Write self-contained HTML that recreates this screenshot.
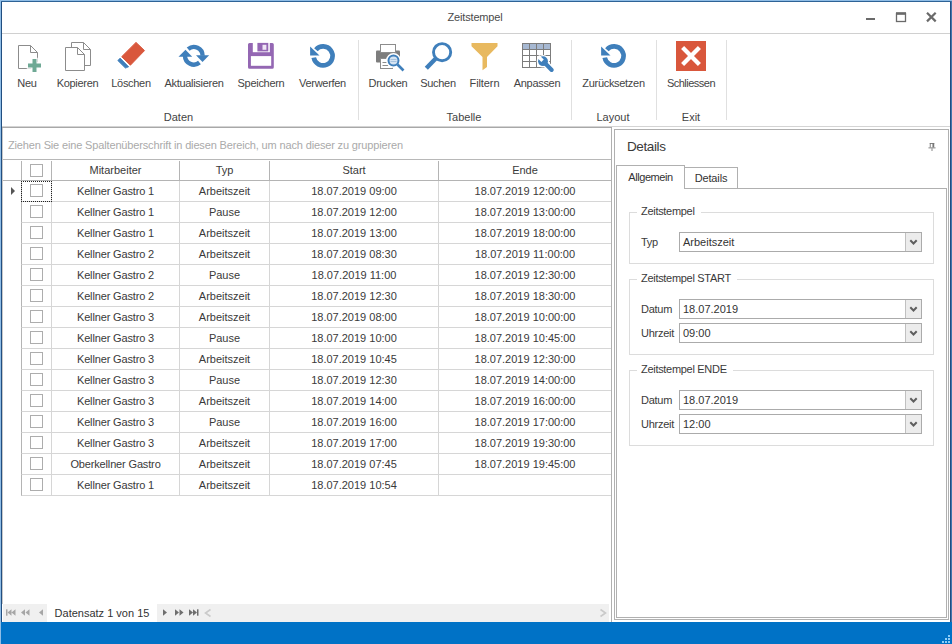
<!DOCTYPE html>
<html lang="de"><head><meta charset="utf-8"><title>Zeitstempel</title>
<style>
*{box-sizing:border-box;margin:0;padding:0}
html,body{width:952px;height:644px;overflow:hidden;background:#fff}
body{font-family:"Liberation Sans",sans-serif;font-size:11px;color:#3c3c3c}
.win{position:absolute;left:0;top:0;width:952px;height:644px;background:#fff;overflow:hidden}
.bl,.bl2,.br,.br2,.bt,.bt2{position:absolute}
.bl{left:0;top:0;width:1px;height:644px;background:#8fbde6}
.bl2{left:1px;top:1px;width:1px;height:621px;background:#214e80}
.br{left:951px;top:0;width:1px;height:622px;background:#4577ad}
.br2{left:950px;top:1px;width:1px;height:621px;background:#214e80}
.bt{left:0;top:0;width:952px;height:1px;background:#8fbde6}
.bt2{left:1px;top:1px;width:950px;height:1px;background:#2e6396}
.title{position:absolute;left:1px;top:2px;width:948px;height:31px;line-height:30px;text-align:center;font-size:11px;color:#4a4a4a;letter-spacing:-0.180px}
.tline{position:absolute;left:2px;top:33px;width:948px;height:1px;background:#d0d0d0}
.wbtn{position:absolute;top:2px}
.ribbon{position:absolute;left:2px;top:34px;width:948px;height:93px;background:#fff}
.rline{position:absolute;left:2px;top:126px;width:948px;height:1px;background:#d4d4d4}
.gtop{position:absolute;left:2px;top:127px;width:610px;height:1px;background:#a8a8a8}
.rb{position:absolute;top:8px;text-align:center;white-space:nowrap}
.rb svg{display:block;margin:0 auto}
.rb span{display:block;margin-top:3px;font-size:11px;line-height:13px;color:#3a3a3a}
.rsep{position:absolute;top:40px;width:1px;height:80px;background:#e0e0e0}
.rgl{position:absolute;top:110px;height:14px;line-height:14px;font-size:11px;color:#444;text-align:center;white-space:nowrap}
/* grid */
.grid{position:absolute;left:2px;top:128px;width:610px;height:476px;border-left:1px solid #c8c8c8;border-right:1px solid #b0b0b0;background:#fff}
.grouppanel{position:absolute;left:0;top:0;width:608px;height:32px;line-height:35px;padding-left:5px;color:#aaa;font-size:11px;border-bottom:1px solid #b8b8b8;white-space:nowrap;letter-spacing:-0.150px}
.ghead{position:absolute;left:0;top:32px;width:608px;height:21px;border-bottom:1px solid #b4b4b4}
.hc{position:absolute;top:1px;height:19px;line-height:18px;text-align:center;border-right:1px solid #b4b4b4;color:#3a3a3a}
.grow{position:absolute;left:-3px;width:611px;height:21px}
.gc{position:absolute;top:0;height:21px;line-height:20px;text-align:center;border-right:1px solid #d6d6d6;border-bottom:1px solid #d6d6d6;color:#3a3a3a;white-space:nowrap}
.c0{left:0;width:19px}
.hc.c1{left:19px;width:30px}.hc.c2{left:49px;width:128px}.hc.c3{left:177px;width:90px}.hc.c4{left:267px;width:169px}.hc.c5{left:436px;width:172px;border-right:none}
.gc.c1{left:21px;width:31px;border-left:1px solid #b4b4b4}.gc.c2{left:52px;width:128px}.gc.c3{left:180px;width:90px}.gc.c4{left:270px;width:169px}.gc.c5{left:439px;width:172px;border-right:none}
.cb{position:absolute;left:8px;top:3px;width:13px;height:13px;border:1px solid #adadad;background:#fff}
.hc .cb{left:8px;top:3px}
.foc{outline:1px dotted #222;outline-offset:-1px}
.ind{position:absolute;left:11px;top:6px;width:0;height:0;border-left:4px solid #555;border-top:4px solid transparent;border-bottom:4px solid transparent}
/* nav */
.nav{position:absolute;left:3px;top:604px;width:606px;height:18px;background:#f0f0f0;overflow:hidden}
.navtxt{position:absolute;left:44px;top:0;width:110px;height:18px;line-height:18px;background:#fff;text-align:center;font-size:11px;color:#333;white-space:nowrap}
.nav svg{position:absolute;top:0;left:0}
/* status */
.status{position:absolute;left:0;top:622px;width:952px;height:22px;background:#0072c6}
.grip{position:absolute;right:1px;bottom:-2px}
/* right panel */
.panel{position:absolute;left:614px;top:129px;width:335px;height:491px;border:1px solid #b0b0b0;background:#fff}
.panel .in{position:absolute;left:2px;top:2px;right:2px;bottom:2px;border:1px solid #b0b0b0}
.ptitle{position:absolute;left:627px;top:138px;font-size:13.500px;letter-spacing:-0.380px;line-height:18px;color:#3a3a3a}
.tab{position:absolute;font-size:11px;color:#333;text-align:center;background:#fff;border:1px solid #b0b0b0;border-bottom:none}
.tab1{left:616px;top:165px;width:69px;height:24px;line-height:23px;z-index:2;letter-spacing:-0.430px}
.tab2{left:684px;top:167px;width:54px;height:21px;line-height:21px;border-bottom:none;letter-spacing:-0.150px}
.tabpage{position:absolute;left:616px;top:188px;width:331px;height:430px;border:1px solid #b0b0b0;background:#fff}
.gb{position:absolute;left:629px;width:305px;border:1px solid #dcdcdc}
.gbl{position:absolute;left:7px;top:-9px;letter-spacing:-0.300px;background:#fff;padding:0 6px 0 4px;font-size:11px;line-height:14px;color:#3a3a3a;white-space:nowrap}
.lbl{position:absolute;left:11px;letter-spacing:-0.250px;font-size:11px;line-height:14px;color:#3a3a3a}
.combo{position:absolute;left:49px;width:243px;height:20px;border:1px solid #ababab;background:#fff;line-height:18px;padding-left:3px;font-size:11px;color:#333}
.combo i{position:absolute;right:0;top:0;width:16px;height:18px;border-left:1px solid #c0c0c0;background:#ececec}
.combo i svg{position:absolute;left:3px;top:6px}

.ico{position:absolute}
.rl{position:absolute;top:76px;width:100px;margin-left:-50px;text-align:center;font-size:11px;line-height:14px;color:#444;white-space:nowrap;letter-spacing:-0.3px}
.rgl{width:100px;margin-left:-50px}
.gridr{position:absolute;left:611px;top:604px;width:1px;height:18px;background:#b0b0b0}
.pin{position:absolute;left:928px;top:143px}

.gc.c2{letter-spacing:-0.150px}

</style></head><body>
<div class="win">
<div class="title">Zeitstempel</div>
<svg class="wbtn" style="left:860px" width="88" height="30" viewBox="0 0 88 30"><g fill="none" stroke="#6a6a6a"><path d="M6 17h9" stroke-width="2"/><rect x="36.500" y="11.500" width="9" height="8" stroke-width="1.300"/><path d="M36 11.500h10" stroke-width="2.600"/><path d="M67 10.700l8.700 8.700M75.700 10.700l-8.700 8.700" stroke-width="2.200"/></g></svg>
<div class="tline"></div>
<div class="ribbon"></div>

<svg class="ico" style="left:13px;top:41px" width="32" height="32" viewBox="0 0 32 32"><path d="M5.500 4.500h12l7 7v16h-19z" fill="#fff" stroke="#8c8c8c"/><path d="M17.500 4.500v7h7" fill="none" stroke="#8c8c8c"/><path d="M19.500 18h4v4.500h4.500v4h-4.500v4.500h-4v-4.500h-4.500v-4h4.500z" fill="#6fa995" stroke="#fff" stroke-width="2.400" paint-order="stroke"/></svg>
<div class="rl" style="left:27px">Neu</div>

<svg class="ico" style="left:61px;top:41px" width="32" height="32" viewBox="0 0 32 32"><path d="M10.500 1.500h12l7 7v16h-19z" fill="#fff" stroke="#8c8c8c"/><path d="M22.500 1.500v7h7" fill="none" stroke="#8c8c8c"/><path d="M4.500 6.500h12l7 7v16h-19z" fill="#fff" stroke="#8c8c8c"/><path d="M16.500 6.500v7h7" fill="none" stroke="#8c8c8c"/></svg>
<div class="rl" style="left:77.500px">Kopieren</div>

<svg class="ico" style="left:115px;top:41px" width="32" height="32" viewBox="0 0 32 32"><path d="M21 1.400L29.500 9.600 15.400 24.200 6.700 15.700z" fill="#d9573c" stroke="#d9573c" stroke-width="1" stroke-linejoin="round"/><path d="M5.100 17.100L13.700 25.800 10.400 27.100 2.800 19.600z" fill="#3f7fbb" stroke="#3f7fbb" stroke-width="0.800" stroke-linejoin="round"/></svg>
<div class="rl" style="left:131px">Löschen</div>

<svg class="ico" style="left:178px;top:41px" width="32" height="32" viewBox="0 0 32 32"><g fill="none" stroke="#3f7fbb" stroke-width="4.400"><path d="M10.140 8.060A8.800 8.800 0 0 1 24.600 14.800"/><path d="M7 14.800A8.800 8.800 0 0 0 21.460 21.540"/></g><g fill="#3f7fbb"><path d="M18 14.300h13.200l-6.700 6.800z"/><path d="M0.500 15.700h13.700l-6.700-7z"/></g></svg>
<div class="rl" style="left:194px">Aktualisieren</div>

<svg class="ico" style="left:245px;top:41px" width="32" height="32" viewBox="0 0 32 32"><path d="M4.500 2h22.800a1.500 1.500 0 0 1 1.500 1.500v22.800a1.500 1.500 0 0 1-1.500 1.500h-22.800a1.500 1.500 0 0 1-1.500-1.500v-22.800a1.500 1.500 0 0 1 1.500-1.500z" fill="#9467b3"/><rect x="5.900" y="15.100" width="20.300" height="9.700" fill="#fff"/><rect x="7.800" y="1.900" width="17" height="9.300" fill="#fff"/><rect x="12.400" y="1.900" width="10.900" height="8.500" fill="#9467b3"/><rect x="17.500" y="3.800" width="3.900" height="5" fill="#efe6f5"/></svg>
<div class="rl" style="left:261px">Speichern</div>

<svg class="ico" style="left:307px;top:41px" width="32" height="32" viewBox="0 0 32 32"><path d="M8.900 8.700A9.500 9.500 0 1 1 6.740 16.650" fill="none" stroke="#3f7fbb" stroke-width="4.700"/><path d="M3.100 5.400v9.100h9.400z" fill="#3f7fbb"/></svg>
<div class="rl" style="left:322.500px">Verwerfen</div>

<div class="rsep" style="left:358px"></div>

<svg class="ico" style="left:374px;top:41px" width="32" height="32" viewBox="0 0 32 32"><rect x="2" y="9.500" width="24" height="12" rx="1" fill="#7d7d7d"/><rect x="6.500" y="3.500" width="15" height="8" fill="#fff" stroke="#8c8c8c"/><rect x="6.500" y="17.500" width="12" height="10" fill="#fff" stroke="#8c8c8c"/><path d="M8.500 21.500h6M8.500 24.500h6" stroke="#8c8c8c"/><circle cx="19.500" cy="19.500" r="6" fill="#d6e4f2" stroke="#fff" stroke-width="3"/><circle cx="19.500" cy="19.500" r="5" fill="#d6e4f2" stroke="#3f7fbb" stroke-width="2"/><path d="M16.500 18.500h6M16.500 20.500h6" stroke="#a9c3de"/><path d="M23.500 23.500l6 6" stroke="#3f7fbb" stroke-width="2.600"/></svg>
<div class="rl" style="left:388px">Drucken</div>

<svg class="ico" style="left:422px;top:41px" width="32" height="32" viewBox="0 0 32 32"><circle cx="20.100" cy="11.200" r="8.600" fill="#fff" stroke="#3f7fbb" stroke-width="2.900"/><path d="M14 17.300l-9.700 9.900" stroke="#3f7fbb" stroke-width="4.400"/></svg>
<div class="rl" style="left:438px">Suchen</div>

<svg class="ico" style="left:469px;top:41px" width="32" height="32" viewBox="0 0 32 32"><path d="M2.500 2h26v3.200l-10.500 10.800v10l-4.500 3.200v-13.200l-11-10.800z" fill="#e8b95f"/></svg>
<div class="rl" style="left:484.500px;letter-spacing:-0.100px">Filtern</div>

<svg class="ico" style="left:521px;top:41px" width="34" height="34" viewBox="0 0 34 34"><rect x="1.500" y="2.500" width="28" height="24" fill="#fff" stroke="#7c7c7c"/><rect x="2" y="3" width="27" height="5.500" fill="#a6b8d2"/><path d="M1.500 8.500h28M1.500 14.500h28M1.500 20.500h28M8.500 2.500v24M15.500 2.500v24M22.500 2.500v24" stroke="#7c7c7c" fill="none"/><g transform="translate(22,20.200) rotate(45)"><circle r="6.300" fill="#fff"/><rect x="2" y="-3.400" width="13.500" height="6.800" rx="3" fill="#fff"/><circle r="4.900" fill="#3f7fbb"/><rect x="2" y="-2.100" width="12.300" height="4.200" rx="2" fill="#3f7fbb"/><rect x="-7" y="-1.700" width="6.400" height="3.400" fill="#fff"/></g></svg>
<div class="rl" style="left:537px">Anpassen</div>

<div class="rsep" style="left:571px"></div>

<svg class="ico" style="left:597.500px;top:41px" width="32" height="32" viewBox="0 0 32 32"><path d="M8.900 8.700A9.500 9.500 0 1 1 6.740 16.650" fill="none" stroke="#3f7fbb" stroke-width="4.700"/><path d="M3.100 5.400v9.100h9.400z" fill="#3f7fbb"/></svg>
<div class="rl" style="left:613.500px">Zurücksetzen</div>

<div class="rsep" style="left:656px"></div>

<svg class="ico" style="left:675px;top:40px" width="32" height="32" viewBox="0 0 32 32"><rect x="1" y="1" width="30" height="30" fill="#d9573c"/><path d="M7.600 7.600l16.800 16.800M24.400 7.600l-16.800 16.800" stroke="#fff" stroke-width="4.300"/></svg>
<div class="rl" style="left:691px;letter-spacing:-0.500px">Schliessen</div>

<div class="rsep" style="left:726px"></div>

<div class="rgl" style="left:178.500px">Daten</div>
<div class="rgl" style="left:464px">Tabelle</div>
<div class="rgl" style="left:613px">Layout</div>
<div class="rgl" style="left:691px">Exit</div>
<div class="rline"></div><div class="gtop"></div>

<div class="grid">
<div class="grouppanel">Ziehen Sie eine Spaltenüberschrift in diesen Bereich, um nach dieser zu gruppieren</div>
<div class="ghead"><div class="hc c0"></div><div class="hc c1"><span class="cb"></span></div><div class="hc c2">Mitarbeiter</div><div class="hc c3">Typ</div><div class="hc c4">Start</div><div class="hc c5">Ende</div></div>
<div class="grow" style="top:53px"><div class="ind"></div><div class="gc c1 foc"><span class="cb"></span></div><div class="gc c2">Kellner Gastro 1</div><div class="gc c3">Arbeitszeit</div><div class="gc c4">18.07.2019 09:00</div><div class="gc c5">18.07.2019 12:00:00</div></div>
<div class="grow" style="top:74px"><div class="gc c1"><span class="cb"></span></div><div class="gc c2">Kellner Gastro 1</div><div class="gc c3">Pause</div><div class="gc c4">18.07.2019 12:00</div><div class="gc c5">18.07.2019 13:00:00</div></div>
<div class="grow" style="top:95px"><div class="gc c1"><span class="cb"></span></div><div class="gc c2">Kellner Gastro 1</div><div class="gc c3">Arbeitszeit</div><div class="gc c4">18.07.2019 13:00</div><div class="gc c5">18.07.2019 18:00:00</div></div>
<div class="grow" style="top:116px"><div class="gc c1"><span class="cb"></span></div><div class="gc c2">Kellner Gastro 2</div><div class="gc c3">Arbeitszeit</div><div class="gc c4">18.07.2019 08:30</div><div class="gc c5">18.07.2019 11:00:00</div></div>
<div class="grow" style="top:137px"><div class="gc c1"><span class="cb"></span></div><div class="gc c2">Kellner Gastro 2</div><div class="gc c3">Pause</div><div class="gc c4">18.07.2019 11:00</div><div class="gc c5">18.07.2019 12:30:00</div></div>
<div class="grow" style="top:158px"><div class="gc c1"><span class="cb"></span></div><div class="gc c2">Kellner Gastro 2</div><div class="gc c3">Arbeitszeit</div><div class="gc c4">18.07.2019 12:30</div><div class="gc c5">18.07.2019 18:30:00</div></div>
<div class="grow" style="top:179px"><div class="gc c1"><span class="cb"></span></div><div class="gc c2">Kellner Gastro 3</div><div class="gc c3">Arbeitszeit</div><div class="gc c4">18.07.2019 08:00</div><div class="gc c5">18.07.2019 10:00:00</div></div>
<div class="grow" style="top:200px"><div class="gc c1"><span class="cb"></span></div><div class="gc c2">Kellner Gastro 3</div><div class="gc c3">Pause</div><div class="gc c4">18.07.2019 10:00</div><div class="gc c5">18.07.2019 10:45:00</div></div>
<div class="grow" style="top:221px"><div class="gc c1"><span class="cb"></span></div><div class="gc c2">Kellner Gastro 3</div><div class="gc c3">Arbeitszeit</div><div class="gc c4">18.07.2019 10:45</div><div class="gc c5">18.07.2019 12:30:00</div></div>
<div class="grow" style="top:242px"><div class="gc c1"><span class="cb"></span></div><div class="gc c2">Kellner Gastro 3</div><div class="gc c3">Pause</div><div class="gc c4">18.07.2019 12:30</div><div class="gc c5">18.07.2019 14:00:00</div></div>
<div class="grow" style="top:263px"><div class="gc c1"><span class="cb"></span></div><div class="gc c2">Kellner Gastro 3</div><div class="gc c3">Arbeitszeit</div><div class="gc c4">18.07.2019 14:00</div><div class="gc c5">18.07.2019 16:00:00</div></div>
<div class="grow" style="top:284px"><div class="gc c1"><span class="cb"></span></div><div class="gc c2">Kellner Gastro 3</div><div class="gc c3">Pause</div><div class="gc c4">18.07.2019 16:00</div><div class="gc c5">18.07.2019 17:00:00</div></div>
<div class="grow" style="top:305px"><div class="gc c1"><span class="cb"></span></div><div class="gc c2">Kellner Gastro 3</div><div class="gc c3">Arbeitszeit</div><div class="gc c4">18.07.2019 17:00</div><div class="gc c5">18.07.2019 19:30:00</div></div>
<div class="grow" style="top:326px"><div class="gc c1"><span class="cb"></span></div><div class="gc c2">Oberkellner Gastro</div><div class="gc c3">Arbeitszeit</div><div class="gc c4">18.07.2019 07:45</div><div class="gc c5">18.07.2019 19:45:00</div></div>
<div class="grow" style="top:347px"><div class="gc c1"><span class="cb"></span></div><div class="gc c2">Kellner Gastro 1</div><div class="gc c3">Arbeitszeit</div><div class="gc c4">18.07.2019 10:54</div><div class="gc c5"></div></div>
</div>
<div class="nav">
<svg width="610" height="18" viewBox="1 0 610 18"><g fill="#a6a6a6"><rect x="4" y="5.300" width="1.500" height="6.400"/><path d="M9.500 5.300v6.400l-4-3.200zM13.500 5.300v6.400l-4-3.200z"/><path d="M23 5.300v6.400l-4-3.200zM27.500 5.300v6.400l-4-3.200z"/><path d="M41 5.300v6.400l-4-3.200z"/></g><g fill="#6e6e6e"><path d="M161 5.300v6.400l4-3.200z"/><path d="M173 5.300v6.400l4-3.200zM177.500 5.300v6.400l4-3.200z"/><path d="M187 5.300v6.400l4-3.200zM191 5.300v6.400l4-3.200z"/><rect x="195" y="5.300" width="1.500" height="6.400"/></g><g fill="none" stroke="#cacaca" stroke-width="1.600"><path d="M208.500 5.500l-5 3.500 5 3.500"/><path d="M598.500 5.500l5 3.500-5 3.500"/></g></svg>
<div class="navtxt">Datensatz 1 von 15</div></div>
<div class="gridr"></div>

<div class="panel"></div>
<div class="ptitle">Details</div>
<svg class="pin" width="8" height="8" viewBox="0 0 9 9"><g fill="#777"><rect x="2" y="0" width="5" height="1"/><rect x="2" y="0" width="1" height="5"/><rect x="5" y="0" width="2" height="5"/><rect x="0.500" y="5" width="8" height="1"/><rect x="4" y="6" width="1" height="3"/></g></svg>
<div class="tabpage"></div>
<div class="tab tab2">Details</div>
<div class="tab tab1">Allgemein</div>

<div class="gb" style="top:212px;height:52px"><div class="gbl">Zeitstempel</div>
<div class="lbl" style="top:22px">Typ</div><div class="combo" style="top:19px">Arbeitszeit<i><svg width="9" height="7" viewBox="0 0 9 7"><path d="M1.300 1.300l3.200 3.200 3.200-3.200" fill="none" stroke="#5e5e5e" stroke-width="2"/></svg></i></div></div>

<div class="gb" style="top:279px;height:76px"><div class="gbl">Zeitstempel START</div>
<div class="lbl" style="top:22px">Datum</div><div class="combo" style="top:19px">18.07.2019<i><svg width="9" height="7" viewBox="0 0 9 7"><path d="M1.300 1.300l3.200 3.200 3.200-3.200" fill="none" stroke="#5e5e5e" stroke-width="2"/></svg></i></div>
<div class="lbl" style="top:46px">Uhrzeit</div><div class="combo" style="top:43px">09:00<i><svg width="9" height="7" viewBox="0 0 9 7"><path d="M1.300 1.300l3.200 3.200 3.200-3.200" fill="none" stroke="#5e5e5e" stroke-width="2"/></svg></i></div></div>

<div class="gb" style="top:370px;height:76px"><div class="gbl">Zeitstempel ENDE</div>
<div class="lbl" style="top:22px">Datum</div><div class="combo" style="top:19px">18.07.2019<i><svg width="9" height="7" viewBox="0 0 9 7"><path d="M1.300 1.300l3.200 3.200 3.200-3.200" fill="none" stroke="#5e5e5e" stroke-width="2"/></svg></i></div>
<div class="lbl" style="top:46px">Uhrzeit</div><div class="combo" style="top:43px">12:00<i><svg width="9" height="7" viewBox="0 0 9 7"><path d="M1.300 1.300l3.200 3.200 3.200-3.200" fill="none" stroke="#5e5e5e" stroke-width="2"/></svg></i></div></div>

<div class="status"><svg class="grip" width="12" height="12" viewBox="0 0 12 12"><g fill="#8fcdf7"><rect x="9" y="1" width="2" height="2"/><rect x="6" y="4" width="2" height="2"/><rect x="9" y="4" width="2" height="2"/><rect x="3" y="7" width="2" height="2"/><rect x="6" y="7" width="2" height="2"/><rect x="9" y="7" width="2" height="2"/></g></svg></div>
<div class="bl"></div><div class="bl2"></div><div class="br"></div><div class="br2"></div><div class="bt"></div><div class="bt2"></div>
</div>
</body></html>
